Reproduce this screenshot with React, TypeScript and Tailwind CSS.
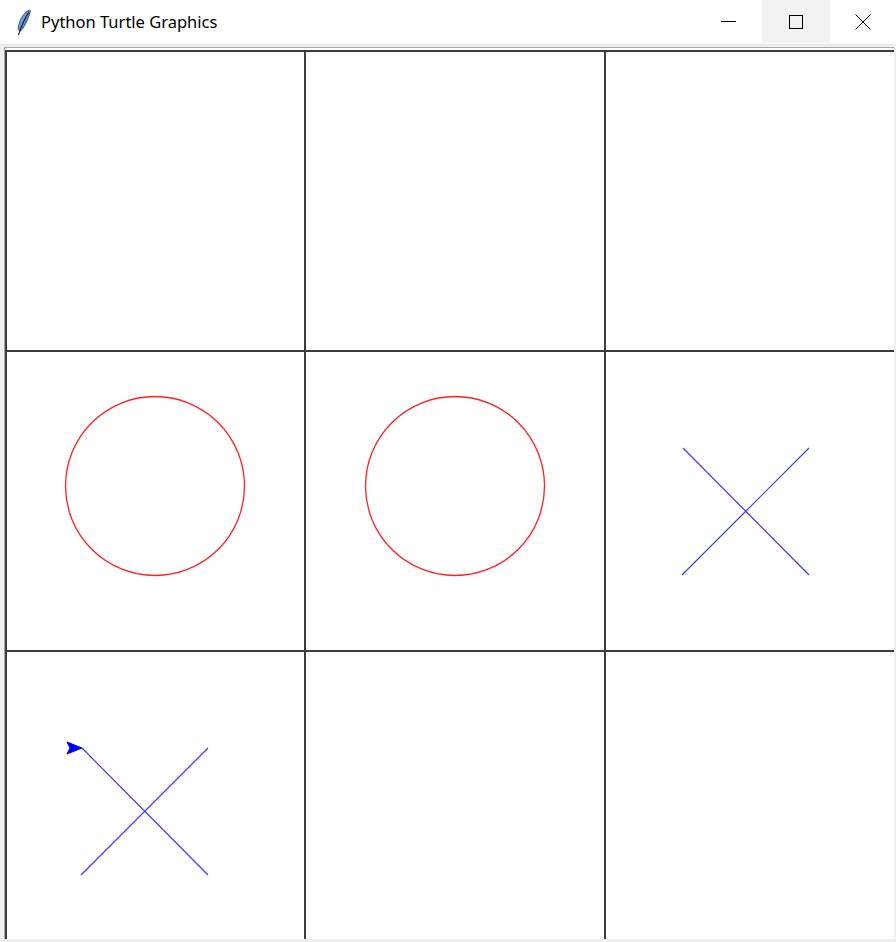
import React from 'react';

type Mark = 'O' | 'X' | null;

const board: Mark[] = [null, null, null, 'O', 'O', 'X', 'X', null, null];

const Feather = () => (
  <svg width="16" height="28" viewBox="0 0 16 28" className="block">
    <defs>
      <linearGradient id="fg" x1="0" y1="0" x2="1" y2="1">
        <stop offset="0" stopColor="#9cc4f0" />
        <stop offset="1" stopColor="#2f5fb0" />
      </linearGradient>
    </defs>
    <path d="M13.5 1 C 9 2.5, 4 9, 2.5 17 C 2 20, 3 22, 4 22.5 C 8 19, 12 11, 14.2 3 C 14.4 2, 14.2 1.2, 13.5 1 Z" fill="url(#fg)" stroke="#24417a" strokeWidth="0.8" />
    <path d="M13 3 C 9 9, 6 15, 2.5 26" fill="none" stroke="#1a1a1a" strokeWidth="1.1" />
  </svg>
);

const Circle = ({ dx }: { dx: number }) => (
  <svg width="298" height="298" className="block">
    <circle cx={149 + dx} cy="134" r="89.5" fill="none" stroke="#ff2020" strokeWidth="1.3" />
  </svg>
);

const Cross = ({ dx, turtle }: { dx: number; turtle?: boolean }) => (
  <svg width="298" height="298" className="block">
    <g transform={`translate(${dx} 0)`}>
      <line x1="76" y1="96" x2="202" y2="223" stroke="#3a3aff" strokeWidth="1.2" />
      <line x1="75" y1="223" x2="202" y2="96" stroke="#3a3aff" strokeWidth="1.2" />
      {turtle && <polygon points="76,96 61,90 64,96 61,102" fill="#0000ff" stroke="#0000ff" strokeWidth="1" />}
    </g>
  </svg>
);

export default function App() {
  return (
    <div className="w-[896px] h-[942px] bg-white flex flex-col overflow-hidden" style={{ fontFamily: '"Segoe UI", "Noto Sans", sans-serif' }}>
      {/* title bar */}
      <div className="h-[44px] flex items-center shrink-0">
        <div className="pl-[16px] pr-[9px] pt-[1px]">
          <Feather />
        </div>
        <div className="text-[16.5px] text-black leading-none pt-[1px]">Python Turtle Graphics</div>
        <div className="ml-auto flex h-[43px] self-start">
          <div className="w-[68px] flex items-center justify-center">
            <div className="w-[15px] h-px bg-black" />
          </div>
          <div className="w-[68px] flex items-center justify-center bg-[#f2f2f2]">
            <div className="w-[14px] h-[14px] border border-black" />
          </div>
          <div className="w-[66px] flex items-center justify-center">
            <svg width="16" height="16" viewBox="0 0 16 16">
              <path d="M0.5 0.5 L15.5 15.5 M15.5 0.5 L0.5 15.5" stroke="#000" strokeWidth="1" />
            </svg>
          </div>
        </div>
      </div>

      {/* window frame */}
      <div className="flex-1 min-h-0 bg-[#f0f0f0] pl-[4px] pt-[2px] pr-[2px] pb-[3px] border-t border-[#e3e3e3] flex">
        <div className="flex-1 min-w-0 bg-white border-l border-t border-[#a8a8a8] overflow-hidden pt-[2px]">
          <div className="grid grid-cols-[299px_300px_300px] w-max border-l-2 border-t-2 border-[#3c3c3c]">
            {board.map((m, i) => {
              const col = i % 3;
              const dx = col === 0 ? -1 : col === 2 ? 1 : 0;
              return (
                <div key={i} className="h-[300px] border-r-2 border-b-2 border-[#3c3c3c] overflow-hidden">
                  {m === 'O' && <Circle dx={col === 0 ? -1 : 0} />}
                  {m === 'X' && <Cross dx={dx} turtle={i === 6} />}
                </div>
              );
            })}
          </div>
        </div>
      </div>
    </div>
  );
}
